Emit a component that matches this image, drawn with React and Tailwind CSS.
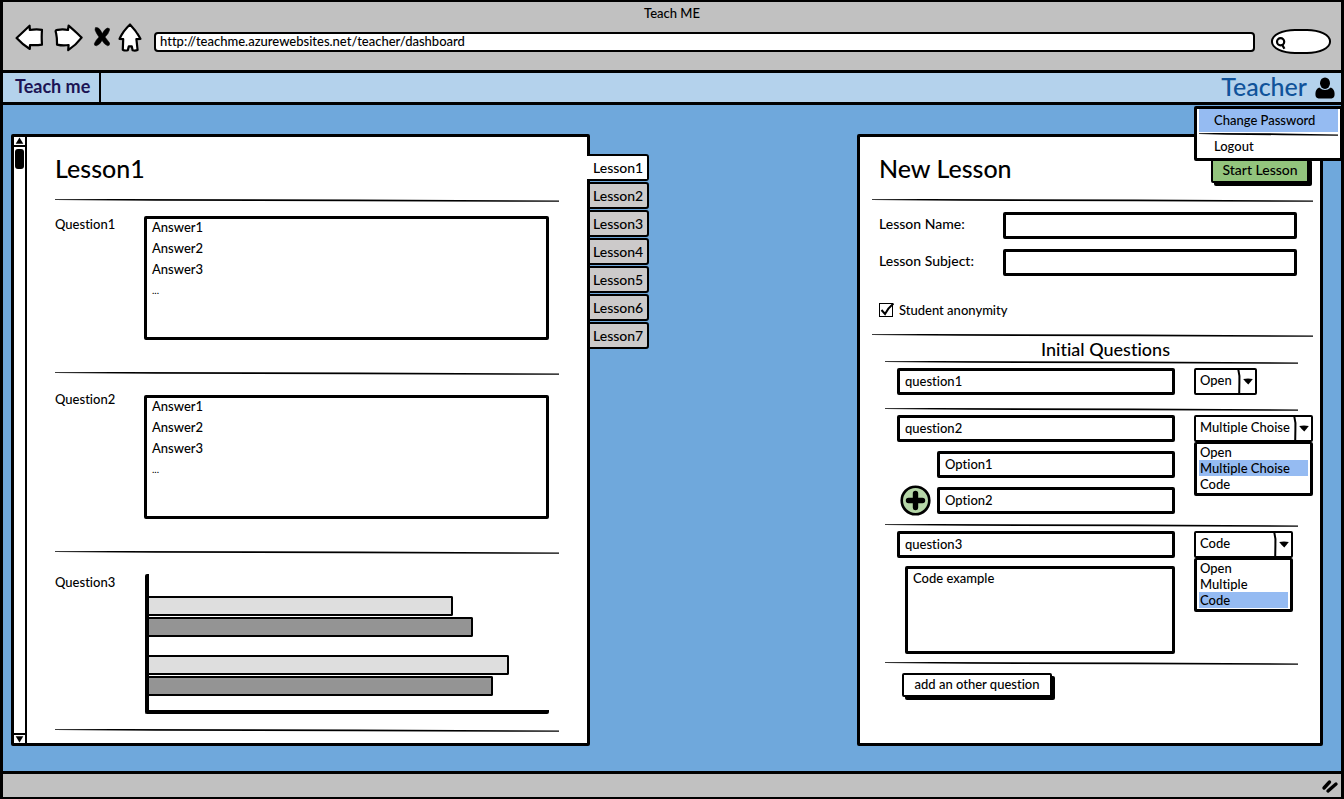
import React from "react";

const lessons = ["Lesson1", "Lesson2", "Lesson3", "Lesson4", "Lesson5", "Lesson6", "Lesson7"];
const answers = ["Answer1", "Answer2", "Answer3"];
const bars = [
  [
    { tone: "light", value: 76 },
    { tone: "dark", value: 81 },
  ],
  [
    { tone: "light", value: 90 },
    { tone: "dark", value: 86 },
  ],
];

const field =
  "block w-full rounded-[2px] border-[3px] border-black bg-white outline-none";

function Rule({ className = "" }) {
  return (
    <svg
      role="separator"
      className={"block h-[3px] w-full " + className}
      viewBox="0 0 500 3"
      preserveAspectRatio="none"
    >
      <path d="M0 0.2 L60 0.1 L300 0.4 L500 1.4 L500 2.8 L300 2.2 L100 1.8 L0 1Z" fill="#000" />
    </svg>
  );
}

function AnswerBox({ label, boxClass = "" }) {
  return (
    <section className="flex items-start">
      <h2 className="w-[89px] shrink-0 leading-4">{label}</h2>
      <ul
        className={
          "mr-2.5 flex h-[124px] flex-1 flex-col gap-[5px] rounded-[2px] border-[3px] border-black px-[5px] leading-4 " +
          boxClass
        }
      >
        {answers.map((a) => (
          <li key={a}>{a}</li>
        ))}
        <li className="text-[10px]">...</li>
      </ul>
    </section>
  );
}

function Chart() {
  return (
    <div className="mr-2.5 flex h-[140px] flex-1 flex-col gap-[18px] rounded-[2px] border-b-4 border-l-4 border-black pt-[22px]">
      {bars.map((group, i) => (
        <div key={i} className="flex flex-col gap-px">
          {group.map((bar) => (
            <div
              key={bar.tone}
              style={{ width: bar.value + "%" }}
              className={
                "h-5 rounded-r-[2px] border-2 border-l-0 border-black " +
                (bar.tone === "light" ? "bg-[#dedede]" : "bg-[#949494]")
              }
            />
          ))}
        </div>
      ))}
    </div>
  );
}

function Select({ id, label, value, options, width, open }) {
  return (
    <div className={"relative h-[27px] shrink-0 " + width}>
      <select
        id={id}
        aria-label={label}
        defaultValue={value}
        className="block h-[27px] w-full appearance-none rounded-[2px] border-2 border-black bg-white pr-4 pb-0.5 pl-1 outline-none"
      >
        {options.map((o) => (
          <option key={o}>{o}</option>
        ))}
      </select>
      <svg
        className="pointer-events-none absolute top-0 right-0 h-[27px] w-5"
        viewBox="0 0 20 27"
      >
        <path d="M1.2 1 Q3 8 2.4 14 L2.2 26" fill="none" stroke="#000" strokeWidth="2" />
        <path d="M6.2 11 Q11 10 15.8 11 Q13.5 14 11.3 16.6 Q8.5 14 6.2 11Z" />
      </svg>
      {open && (
        <ul className="absolute top-full left-0 z-10 w-full rounded-[2px] border-[3px] border-t-2 border-black bg-white px-0.5 pb-px">
          {options.map((o) => (
            <li key={o} className={"pl-px leading-4 " + (o === value ? "bg-[#95bbf2]" : "")}>
              {o}
            </li>
          ))}
        </ul>
      )}
    </div>
  );
}

function QuestionField({ id, value }) {
  return (
    <input
      id={id}
      aria-label={value}
      defaultValue={value}
      className={field + " h-[27px] pb-px pl-[5px]"}
    />
  );
}

function BrowserBar() {
  const icon = "block fill-white stroke-black";
  return (
    <header className="flex h-[71px] flex-col border-b-[3px] border-black bg-[#c1c1c1]">
      <p className="pt-[3px] text-center leading-4">Teach ME</p>
      <div className="flex items-center pr-2.5 pl-3">
        <button type="button" aria-label="Back">
          <svg className={icon} width="28" height="28" viewBox="0 0 28 28" strokeWidth="2.2" strokeLinejoin="round">
            <path d="M1.6 14 Q8 8 14.6 1.7 L14.8 6 Q21 5 27 5.8 Q26.4 13 27 20.6 Q21 21.6 15 21 L14.8 25 Q8 21 1.6 14Z" />
          </svg>
        </button>
        <button type="button" aria-label="Forward" className="ml-[11px]">
          <svg className={icon} width="29" height="28" viewBox="0 0 29 28" strokeWidth="2.2" strokeLinejoin="round">
            <path d="M1.6 7 Q2 5.6 4 5.8 Q9 5 14 6 L14.6 1.6 Q21 7 27.6 13.6 Q22 21 14.2 26.2 L14.6 21 Q9 22 3 20.6 Q3.2 13 1.6 7Z" />
          </svg>
        </button>
        <button type="button" aria-label="Stop" className="ml-[9px]">
          <svg className="block" width="20" height="24" viewBox="0 0 20 24" fill="#000" stroke="#000" strokeLinejoin="round">
            <path d="M3.4 1.6 Q6 0.8 8 3.6 L10.4 7.6 Q12.4 3 15.4 2 Q18.4 2 17.4 4.6 Q16.6 7.6 13 11 Q15.6 14.4 17.6 17 Q18 19.8 15.6 19.8 Q12.6 18.8 10 14.6 Q7.6 19 4.4 19.8 Q1.8 19.6 2.4 17.4 Q3.4 14.6 7 11 Q4 7 3 4Z" strokeWidth="0.5" />
          </svg>
        </button>
        <button type="button" aria-label="Home" className="ml-1.5">
          <svg className={icon} width="24" height="29" viewBox="0 0 24 29" strokeWidth="2.2" strokeLinejoin="round">
            <path d="M12 1.5 Q18 7.5 22.4 15.8 L18.4 16.2 L19.6 27 Q17 28 14.6 27.2 L13.8 23.4 L10.8 23.4 L9.8 27.2 Q7 28 4.8 26.8 L5.2 16.2 L1.6 15.8 Q5 8 12 1.5Z" />
          </svg>
        </button>
        <input
          id="address"
          aria-label="Address"
          defaultValue="http://teachme.azurewebsites.net/teacher/dashboard"
          className="mt-2 ml-3 h-5 min-w-0 flex-1 rounded-[4px] border-2 border-black bg-white pb-0.5 pl-1 outline-none"
        />
        <div className="relative mt-2 ml-4 w-[60px]">
          <input
            type="search"
            aria-label="Search"
            className="block h-[25px] w-full rounded-[24px/12px] border-2 border-black bg-white pl-5 outline-none"
          />
          <svg className="pointer-events-none absolute top-2 left-1" width="12" height="13" viewBox="0 0 12 13" fill="none" stroke="#000" strokeWidth="2.2">
            <circle cx="5.6" cy="4.8" r="3.6" />
            <path d="M7 7.4 L9.4 11.8" />
          </svg>
        </div>
      </div>
    </header>
  );
}

function NavBar() {
  return (
    <nav className="relative flex h-8 items-stretch justify-between border-b-[3px] border-black bg-[#b4d2ec]">
      <a
        href="#home"
        className="flex items-center border-r-2 border-black pr-[9px] pb-[3px] pl-3 text-lg font-bold text-[#1c1454]"
      >
        Teach me
      </a>
      <button
        type="button"
        aria-expanded="true"
        className="flex items-center gap-2 pr-1.5 text-[25px] text-[#10539a]"
      >
        <span className="pb-1 leading-6">Teacher</span>
        <svg width="20" height="22" viewBox="0 0 20 22" fill="#000">
          <ellipse cx="10" cy="6.2" rx="5" ry="5.8" />
          <path d="M4.2 10.6 Q10 15.6 15.8 10.6 Q19.6 12.4 19.6 17 Q19.6 21.4 16.5 21.4 L3.6 21.4 Q0.4 21.4 0.4 17 Q0.4 12.4 4.2 10.6Z" />
        </svg>
      </button>
      <div className="absolute top-[33px] -right-0.5 z-20 w-[149px] rounded-[2px] border-[3px] border-black bg-white px-0.5">
        <a href="#password" className="mb-px block bg-[#95bbf2] pb-px pl-[15px] leading-[22px]">
          Change Password
        </a>
        <Rule />
        <a href="#logout" className="block pb-0.5 pl-[15px] leading-5">
          Logout
        </a>
      </div>
    </nav>
  );
}

function LessonPanel() {
  return (
    <div className="flex items-start">
      <div className="flex min-w-0 flex-1 self-stretch rounded-[2px] border-[3px] border-black bg-white">
        <div className="flex w-[13px] shrink-0 flex-col border-r-2 border-black">
          <button type="button" aria-label="Scroll up" className="border-b-2 border-black">
            <svg className="block h-2 w-full" viewBox="0 0 10 8">
              <path d="M5 0.5 L8.8 6.8 L1.2 6.8Z" />
            </svg>
          </button>
          <div className="flex-1 px-px pt-0.5">
            <div className="h-5 rounded-[3px] bg-black" />
          </div>
          <button type="button" aria-label="Scroll down" className="border-t-2 border-black">
            <svg className="block h-2 w-full" viewBox="0 0 10 8">
              <path d="M1.2 1.2 L8.8 1.2 L5 7.5Z" />
            </svg>
          </button>
        </div>
        <div className="min-w-0 flex-1 pt-[15px] pr-7 pb-[11px] pl-7">
          <h1 className="text-[25px] leading-8">Lesson1</h1>
          <Rule className="mt-[15px] mb-3.5" />
          <AnswerBox label="Question1" />
          <Rule className="mt-8 mb-4" />
          <AnswerBox label="Question2" boxClass="mt-1" />
          <Rule className="mt-8 mb-5" />
          <section className="flex items-start">
            <h2 className="w-[90px] shrink-0 leading-4">Question3</h2>
            <Chart />
          </section>
          <Rule className="mt-[15px]" />
        </div>
      </div>
      <div role="tablist" className="mt-5 -ml-[3px] flex w-[62px] shrink-0 flex-col gap-px text-sm">
        {lessons.map((l, i) => (
          <button
            key={l}
            type="button"
            role="tab"
            aria-selected={i === 0}
            className={
              "h-[27px] rounded-r-[3px] border-2 border-black text-left " +
              (i === 0 ? "border-l-0 bg-white pl-1.5" : "border-l-[3px] bg-[#cccaca] pl-[3px]")
            }
          >
            {l}
          </button>
        ))}
      </div>
    </div>
  );
}

function NewLessonForm() {
  return (
    <form className="rounded-[2px] border-[3px] border-black bg-white pr-[7px] pl-3">
      <div className="flex items-start justify-between pt-[15px] pr-1 pl-[7px]">
        <h1 className="text-[25px] leading-8">New Lesson</h1>
        <button
          type="button"
          className="mt-[5px] h-[26px] w-[98px] rounded-[2px] border-2 border-black bg-[#93c47d] text-sm shadow-[3px_3px_0_#000]"
        >
          Start Lesson
        </button>
      </div>
      <Rule className="mt-[15px]" />
      <div className="flex items-start pt-2.5 pr-4 pl-[7px]">
        <label htmlFor="lesson-name" className="w-[124px] shrink-0 text-sm leading-6">
          Lesson Name:
        </label>
        <input id="lesson-name" className={field + " h-[27px] px-1"} />
      </div>
      <div className="flex items-start pt-2.5 pr-4 pl-[7px]">
        <label htmlFor="lesson-subject" className="w-[124px] shrink-0 text-sm leading-6">
          Lesson Subject:
        </label>
        <input id="lesson-subject" className={field + " h-[27px] px-1"} />
      </div>
      <div className="flex items-center gap-1.5 pt-6 pl-[7px]">
        <span className="relative block size-3.5">
          <input
            id="anonymity"
            type="checkbox"
            defaultChecked
            className="block size-3.5 appearance-none border border-black bg-white"
          />
          <svg className="pointer-events-none absolute inset-0" width="16" height="14" viewBox="0 0 16 14" fill="none" stroke="#000" strokeWidth="2">
            <path d="M2.5 7 L6 11 Q9 5 14.5 0.5" />
          </svg>
        </span>
        <label htmlFor="anonymity" className="leading-5">
          Student anonymity
        </label>
      </div>
      <Rule className="mt-3.5" />
      <div className="pr-[15px] pl-[13px]">
        <h2 className="pl-7 text-center text-lg leading-6">Initial Questions</h2>
        <Rule />
        <div className="flex gap-[19px] pt-1 pb-[13px] pl-3">
          <div className="w-[278px] shrink-0">
            <QuestionField id="q1" value="question1" />
          </div>
          <Select id="type1" label="Type of question 1" value="Open" width="w-[63px]" options={["Open", "Code"]} />
        </div>
        <Rule />
        <div className="flex gap-[19px] pt-1 pb-2.5 pl-3">
          <div className="flex w-[278px] shrink-0 flex-col gap-[9px]">
            <QuestionField id="q2" value="question2" />
            <div className="pl-10">
              <QuestionField id="q2-option1" value="Option1" />
            </div>
            <div className="flex items-center gap-1.5 pl-[3px]">
              <button type="button" aria-label="Add option" className="-my-0.5 shrink-0">
                <svg className="block" width="31" height="31" viewBox="0 0 31 31">
                  <circle cx="15.5" cy="15.5" r="13.8" fill="#b6d7a8" stroke="#000" strokeWidth="2.6" />
                  <path d="M15.5 8.5 V22.5 M8.5 15.5 H22.5" stroke="#000" strokeWidth="5.4" strokeLinecap="round" />
                </svg>
              </button>
              <QuestionField id="q2-option2" value="Option2" />
            </div>
          </div>
          <Select
            id="type2"
            label="Type of question 2"
            value="Multiple Choise"
            width="w-[119px]"
            options={["Open", "Multiple Choise", "Code"]}
            open
          />
        </div>
        <Rule />
        <div className="flex gap-[19px] pt-1 pb-2 pl-3">
          <div className="flex w-[278px] shrink-0 flex-col gap-2">
            <QuestionField id="q3" value="question3" />
            <div className="pl-2">
              <textarea
                id="code"
                aria-label="Code"
                defaultValue="Code example"
                className={field + " h-[88px] resize-none px-[5px] pt-px leading-4"}
              />
            </div>
          </div>
          <Select
            id="type3"
            label="Type of question 3"
            value="Code"
            width="w-[99px]"
            options={["Open", "Multiple", "Code"]}
            open
          />
        </div>
        <Rule />
        <button
          type="button"
          className="mt-2 ml-[17px] block h-6 w-[150px] rounded-[2px] border-2 border-black bg-white shadow-[3px_3px_0_#000]"
        >
          add an other question
        </button>
      </div>
    </form>
  );
}

export default function App() {
  return (
    <div className="flex min-h-screen flex-col border-[3px] border-t-2 border-black bg-[#6fa8dc] font-[Lato,sans-serif] text-[13px] font-medium text-black [font-variant-ligatures:none]">
      <BrowserBar />
      <NavBar />
      <main className="grid flex-1 grid-cols-[minmax(0,638fr)_minmax(0,208fr)_minmax(0,466fr)] pt-[29px] pr-[18px] pb-[25px] pl-2">
        <LessonPanel />
        <div />
        <NewLessonForm />
      </main>
      <footer className="flex h-[26px] items-center justify-end border-t-[3px] border-black bg-[#c1c1c1] pr-0.5">
        <svg width="18" height="18" viewBox="0 0 18 18" stroke="#000" strokeWidth="3.4" strokeLinecap="round">
          <path d="M3 11 L8.5 5 M7 14 L15 7" />
        </svg>
      </footer>
    </div>
  );
}
